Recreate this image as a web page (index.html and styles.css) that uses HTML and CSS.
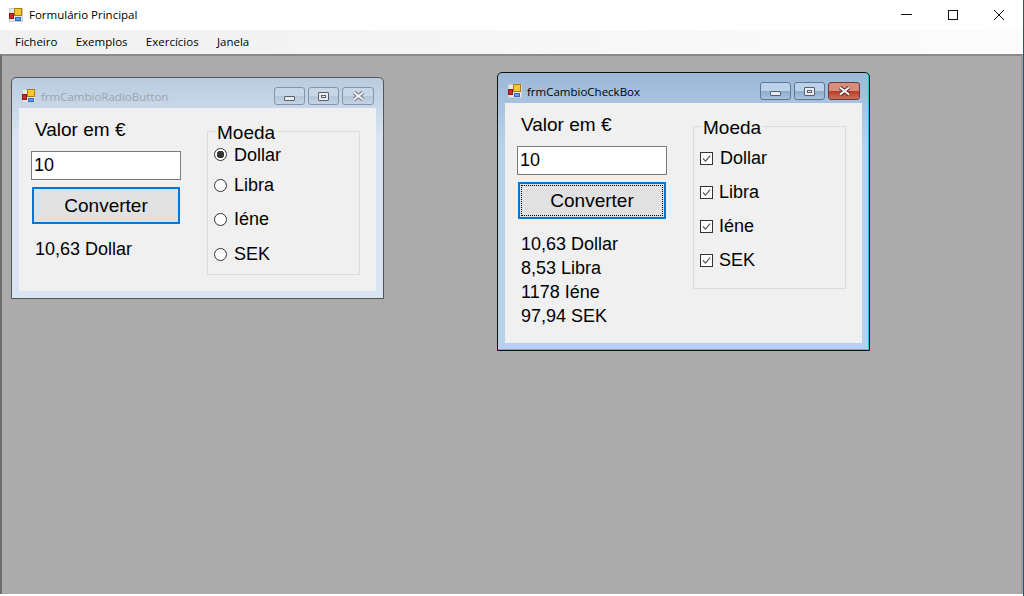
FILE: index.html
```html
<!DOCTYPE html>
<html lang="pt">
<head>
    <meta charset="UTF-8">
    <title>Formulário Principal</title>
    <link rel="stylesheet" href="styles.css">
</head>
<body>
    <svg class="sprites" width="0" height="0">
        <symbol id="app-icon" viewBox="0 0 14 14">
            <rect x="0.5" y="0.5" width="13" height="13" fill="#e8e8e8" stroke="#cfcfcf"/>
            <rect x="0.5" y="5.5" width="4" height="5" fill="#d0281f" stroke="#8a1a14"/>
            <rect x="5.5" y="0.5" width="7" height="7" fill="#f6c828" stroke="#a87c10"/>
            <rect x="6.5" y="9.5" width="5" height="3" fill="#5a9ce6" stroke="#2f6cc0"/>
        </symbol>
        <symbol id="check-icon" viewBox="0 0 11 11">
            <path d="M2 5.5 4.5 8.2 9.2 2.6" fill="none" stroke="#555" stroke-width="1.2"/>
        </symbol>
        <symbol id="close-glyph" viewBox="0 0 15 10">
            <path d="M3 1.5 12 8.5M12 1.5 3 8.5" stroke="currentColor" stroke-width="4"/>
            <path d="M3 1.5 12 8.5M12 1.5 3 8.5" stroke="#f0f2f4" stroke-width="2.2"/>
        </symbol>
    </svg>

    <div class="app">
        <header class="titlebar">
            <svg class="app-icon"><use href="#app-icon"/></svg>
            <span class="title">Formulário Principal</span>
            <div class="sys-buttons">
                <span class="sys-btn"><svg width="12" height="12"><path d="M0 5.5H11" stroke="#111"/></svg></span>
                <span class="sys-btn"><svg width="12" height="12"><rect x="1.5" y="1.5" width="9" height="9" fill="none" stroke="#111"/></svg></span>
                <span class="sys-btn"><svg width="12" height="12"><path d="M1 1 11 11M11 1 1 11" stroke="#111"/></svg></span>
            </div>
        </header>

        <nav class="menu">
            <span>Ficheiro</span>
            <span>Exemplos</span>
            <span>Exercícios</span>
            <span>Janela</span>
        </nav>

        <main class="mdi">
            <section class="win win-radio">
                <div class="win-caption">
                    <svg class="win-icon"><use href="#app-icon"/></svg>
                    <span class="win-title">frmCambioRadioButton</span>
                    <div class="win-buttons">
                        <span class="cap-btn"><i class="glyph-min"></i></span>
                        <span class="cap-btn"><i class="glyph-max"></i></span>
                        <span class="cap-btn cap-close"><svg class="glyph-close"><use href="#close-glyph"/></svg></span>
                    </div>
                </div>
                <div class="win-client">
                    <div class="col">
                        <div class="field-label">Valor em €</div>
                        <input class="textbox" type="text" value="10">
                        <button class="convert" type="button">Converter</button>
                        <div class="results">
                            <div>10,63 Dollar</div>
                        </div>
                    </div>
                    <div class="group">
                        <div class="group-title">Moeda</div>
                        <label class="opt"><input class="radio" type="radio" name="moeda" checked>Dollar</label>
                        <label class="opt"><input class="radio" type="radio" name="moeda">Libra</label>
                        <label class="opt"><input class="radio" type="radio" name="moeda">Iéne</label>
                        <label class="opt"><input class="radio" type="radio" name="moeda">SEK</label>
                    </div>
                </div>
            </section>

            <section class="win win-check">
                <div class="win-caption">
                    <svg class="win-icon"><use href="#app-icon"/></svg>
                    <span class="win-title">frmCambioCheckBox</span>
                    <div class="win-buttons">
                        <span class="cap-btn"><i class="glyph-min"></i></span>
                        <span class="cap-btn"><i class="glyph-max"></i></span>
                        <span class="cap-btn cap-close"><svg class="glyph-close"><use href="#close-glyph"/></svg></span>
                    </div>
                </div>
                <div class="win-client">
                    <div class="col">
                        <div class="field-label">Valor em €</div>
                        <input class="textbox" type="text" value="10">
                        <button class="convert" type="button"><span class="focus-rect">Converter</span></button>
                        <div class="results">
                            <div>10,63 Dollar</div>
                            <div>8,53 Libra</div>
                            <div>1178 Iéne</div>
                            <div>97,94 SEK</div>
                        </div>
                    </div>
                    <div class="group">
                        <div class="group-title">Moeda</div>
                        <div class="opt"><span class="check"><svg><use href="#check-icon"/></svg></span>Dollar</div>
                        <div class="opt"><span class="check"><svg><use href="#check-icon"/></svg></span>Libra</div>
                        <div class="opt"><span class="check"><svg><use href="#check-icon"/></svg></span>Iéne</div>
                        <div class="opt"><span class="check"><svg><use href="#check-icon"/></svg></span>SEK</div>
                    </div>
                </div>
            </section>
        </main>
    </div>
</body>
</html>
```

FILE: styles.css
```css
* {
    box-sizing: border-box;
}
html, body {
    margin: 0;
    padding: 0;
    overflow: hidden;
}
body {
    width: 1024px;
    height: 596px;
    background-color: #fff;
    font-family: "Open Sans", "Noto Sans", sans-serif;
    color: #000;
}
.sprites {
    position: absolute;
}
.app {
    display: flex;
    flex-direction: column;
    width: 1024px;
    height: 596px;
    padding-bottom: 2px;
    border-right: 1px solid #2b4f7a;
}

/* main window */
.titlebar {
    display: flex;
    align-items: center;
    height: 30px;
    padding-left: 9px;
}
.app-icon {
    width: 14px;
    height: 14px;
    flex: none;
}
.title {
    margin: 0 0 2px 6px;
    font-size: 11.5px;
}
.sys-buttons {
    display: flex;
    margin-left: auto;
    margin-right: 1px;
}
.sys-btn {
    display: flex;
    align-items: center;
    justify-content: center;
    width: 46px;
    height: 30px;
}
.menu {
    display: flex;
    align-items: center;
    gap: 18.3px;
    height: 24px;
    padding: 0 0 2px 15px;
    font-size: 11.5px;
    background: linear-gradient(to right, #f0f0f0, #fcfcfc);
}
.mdi {
    position: relative;
    flex: 1;
    background-color: #ababab;
    border-top: 2px solid #8a8a8a;
    border-left: 2px solid #6e6e6e;
    border-right: 2px solid #a0a0a0;
}

/* child windows */
.win {
    position: absolute;
    display: flex;
    flex-direction: column;
    width: 373px;
    padding: 0 7px 7px;
    border: 1px solid #333;
    border-radius: 5px 5px 0 0;
}
.win-radio {
    left: 9px;
    top: 21px;
    height: 222px;
    background: linear-gradient(#b9cbdf, #d9e5f2 60px);
    border-color: #555;
}
.win-check {
    left: 495px;
    top: 16px;
    height: 279px;
    background: linear-gradient(#9cb8d6, #b8d1ea 70px);
    border-color: #111;
    box-shadow: inset -1px -1px 0 #2bc4e4;
}
.win-caption {
    display: flex;
    align-items: center;
    flex: none;
    height: 30px;
    padding-top: 6px;
}
.win-icon {
    width: 14px;
    height: 14px;
    margin-left: 3px;
    flex: none;
}
.win-title {
    margin-left: 5px;
    font-size: 11.5px;
}
.win-radio .win-title {
    color: #9aa3ad;
}
.win-buttons {
    display: flex;
    gap: 3px;
    margin-left: auto;
    margin-right: 2px;
}
.cap-btn {
    display: flex;
    align-items: center;
    justify-content: center;
    width: 31px;
    height: 18px;
    border: 1px solid #8495ab;
    border-radius: 3px;
    background: linear-gradient(#c8d7e8 50%, #b6c7da 50%, #c4d3e4);
    color: #6b7480;
}
.cap-btn + .cap-btn + .cap-btn {
    width: 32px;
}
.win-check .cap-btn {
    border-color: #5e7692;
    background: linear-gradient(#bcd2ea 50%, #8eabcb 50%, #a9c3de);
}
.win-check .cap-close {
    border-color: #6b3a3a;
    background: linear-gradient(#d98d7c 50%, #b93c24 50%, #c8705c);
    color: #5a2a24;
}
.glyph-min {
    display: block;
    width: 11px;
    height: 5px;
    margin-top: 4px;
    background-color: #e8ecf0;
    border: 1px solid #555e6a;
    border-radius: 1px;
}
.glyph-max {
    display: block;
    width: 11px;
    height: 9px;
    background-color: #e8ecf0;
    border: 1px solid #555e6a;
    border-radius: 1px;
    box-shadow: inset 0 0 0 2px #e8ecf0, inset 0 0 0 3px #555e6a;
}
.glyph-close {
    display: block;
    width: 15px;
    height: 10px;
}

/* form contents */
.win-client {
    display: flex;
    flex: 1;
    padding-left: 12px;
    background-color: #f0f0f0;
    font-family: "Liberation Sans", Arial, sans-serif;
    font-size: 18px;
}
.col {
    width: 176px;
    flex: none;
}
.field-label {
    height: 21px;
    margin: 11px 0 0 4px;
    font-size: 19px;
    line-height: 21px;
}
.textbox {
    display: block;
    width: 150px;
    height: 29px;
    margin-top: 11px;
    padding: 0 2px;
    border: 1px solid #7a7a7a;
    background-color: #fff;
    font: inherit;
    color: #000;
    outline: none;
}
.convert {
    display: block;
    width: 148px;
    height: 37px;
    margin: 7px 0 0 1px;
    padding: 0;
    border: 2px solid #0078d7;
    background-color: #e1e1e1;
    font: inherit;
    font-size: 19px;
    color: #000;
}
.focus-rect {
    display: flex;
    align-items: center;
    justify-content: center;
    height: 31px;
    margin: 1px;
    border: 1px dotted #000;
}
.results {
    margin: 13px 0 0 4px;
    line-height: 24px;
}
.group {
    width: 153px;
    flex: none;
    margin-top: 23px;
    border: 1px solid #dcdcdc;
}
.win-radio .group {
    height: 144px;
}
.win-check .group {
    height: 163px;
}
.group-title {
    width: fit-content;
    height: 21px;
    margin: -10px 0 0 8px;
    padding: 0 1px;
    font-size: 19px;
    line-height: 21px;
    background-color: #f0f0f0;
}
.opt {
    display: flex;
    align-items: center;
    height: 24px;
    margin-left: 6px;
}
.radio {
    appearance: none;
    width: 13px;
    height: 13px;
    margin: 0 7px 0 0;
    border: 1px solid #333;
    border-radius: 50%;
    background-color: #fff;
    flex: none;
}
.radio:checked {
    margin-bottom: 2px;
    background: radial-gradient(circle, #333 0, #333 3.5px, #fff 4px);
}
.win-radio .group-title {
    margin-bottom: 0;
}
.win-radio .opt:nth-child(3) {
    margin-top: 6px;
}
.win-radio .opt:nth-child(4) {
    margin-top: 10px;
}
.win-radio .opt:nth-child(5) {
    margin-top: 11px;
}
.win-check .group-title {
    margin-bottom: 8px;
}
.win-check .opt + .opt {
    margin-top: 10px;
}
.win-check .opt + .opt .check {
    margin-right: 6px;
}
.check {
    display: block;
    width: 13px;
    height: 13px;
    margin-right: 7px;
    border: 1px solid #333;
    background-color: #fff;
    flex: none;
}
.check svg {
    display: block;
    width: 11px;
    height: 11px;
}
```
